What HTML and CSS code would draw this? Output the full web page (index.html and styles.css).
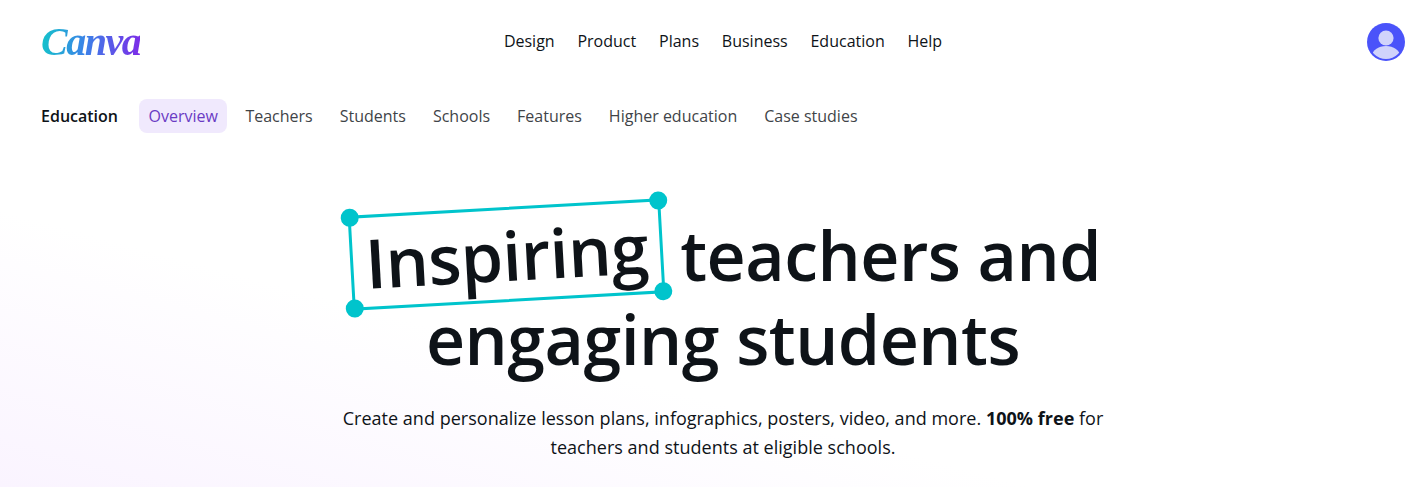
FILE: index.html
```html
<!DOCTYPE html>
<html lang="en">
<head>
    <meta charset="UTF-8">
    <title>Canva for Education</title>
    <link rel="stylesheet" href="styles.css">
</head>
<body>
<header class="topbar">
    <a class="logo">Canva</a>
    <nav class="main-nav">
        <a>Design</a>
        <a>Product</a>
        <a>Plans</a>
        <a>Business</a>
        <a>Education</a>
        <a>Help</a>
    </nav>
    <svg class="avatar" viewBox="0 0 38 38" width="38" height="38">
        <defs>
            <clipPath id="avatarClip"><circle cx="19" cy="19" r="17"/></clipPath>
        </defs>
        <circle cx="19" cy="19" r="19" fill="#4a53fa"/>
        <circle cx="19" cy="15" r="7.6" fill="#d0d3fb"/>
        <ellipse cx="19" cy="33" rx="14" ry="10" fill="#d0d3fb" clip-path="url(#avatarClip)"/>
    </svg>
</header>

<nav class="sub-nav">
    <span class="sub-title">Education</span>
    <a class="active">Overview</a>
    <a>Teachers</a>
    <a>Students</a>
    <a>Schools</a>
    <a>Features</a>
    <a>Higher education</a>
    <a>Case studies</a>
</nav>

<main class="hero">
    <h1>
        <span class="select-box">Inspiring
            <i class="handle tl"></i>
            <i class="handle tr"></i>
            <i class="handle bl"></i>
            <i class="handle br"></i>
        </span>
        teachers and<br>engaging students
    </h1>
    <p>Create and personalize lesson plans, infographics, posters, video, and more. <b>100% free</b> for<br>teachers and students at eligible schools.</p>
</main>
</body>
</html>
```

FILE: styles.css
```css
:root {
    --ink: #0e1318;
    --teal: #00c4cc;
    --purple: #6a3bc4;
}
body {
    margin: 0;
    height: 487px;
    overflow: hidden;
    font-family: "Open Sans", sans-serif;
    color: var(--ink);
    background: linear-gradient(15deg, #faf4ff 0%, #fff 32%);
}
.topbar {
    height: 82px;
    padding: 0 8px 0 41px;
    display: grid;
    grid-template-columns: 1fr auto 1fr;
    align-items: center;
}
.logo {
    font-family: "Liberation Serif", serif;
    font-style: italic;
    font-weight: 700;
    font-size: 40px;
    letter-spacing: -1.5px;
    background: linear-gradient(95deg, #12c6c9 0%, #3b82e8 45%, #7d2ae8 100%);
    -webkit-background-clip: text;
    background-clip: text;
    color: transparent;
    justify-self: start;
}
.main-nav {
    display: flex;
    gap: 22.8px;
    font-size: 16px;
    line-height: 20px;
}
.avatar {
    justify-self: end;
    margin-top: 2px;
}
.sub-nav {
    display: flex;
    align-items: center;
    height: 34px;
    margin-top: 17px;
    padding-left: 41px;
    font-size: 16px;
    color: #3f4448;
}
.sub-nav a { padding: 0 13.5px; }
.sub-title {
    font-weight: 600;
    color: var(--ink);
    margin-right: 21px;
}
.sub-nav .active {
    padding: 0 9.5px;
    margin-right: 4.5px;
    line-height: 34px;
    border-radius: 8px;
    background: #f0e9fd;
    color: var(--purple);
}
.hero {
    text-align: center;
    padding: 74px 8px 0 41px;
}
.hero h1 {
    margin: 0;
    font-size: 68px;
    line-height: 83px;
    font-weight: 600;
    letter-spacing: -0.5px;
}
.select-box {
    position: relative;
    display: inline-block;
    margin: 0 0 -5px 5px;
    padding: 0 12px;
    line-height: 89px;
    border: 3px solid var(--teal);
    transform: rotate(-3.2deg);
}
.handle {
    position: absolute;
    width: 18px;
    height: 18px;
    border-radius: 50%;
    background: var(--teal);
}
.tl { left: -10px; top: -10px; }
.tr { right: -10px; top: -10px; }
.bl { left: -10px; bottom: -10px; }
.br { right: -10px; bottom: -10px; }
.hero p {
    margin: 24px 0 0;
    font-size: 18px;
    line-height: 29px;
    letter-spacing: 0.02px;
}
.hero b { font-weight: 700; }
```
